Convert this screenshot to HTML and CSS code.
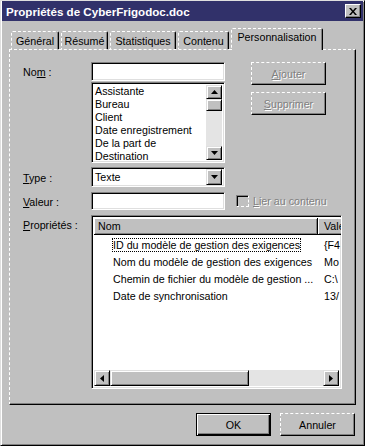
FILE: index.html
```html
<!DOCTYPE html>
<html lang="fr">
<head>
  <meta charset="UTF-8">
  <title>Propriétés de CyberFrigodoc.doc</title>
  <link rel="stylesheet" href="styles.css">
</head>
<body>
<div class="window">
  <div class="titlebar">
    <span class="title">Propriétés de CyberFrigodoc.doc</span>
    <span class="close">
      <svg width="8" height="7" viewBox="0 0 8 7"><path d="M0 0h2l2 2.5L6 0h2L5 3.5 8 7H6L4 4.5 2 7H0l3-3.5z" fill="#000"/></svg>
    </span>
  </div>

  <div class="tabs">
    <div class="tab t-gen">Général</div>
    <div class="tab t-res">Résumé</div>
    <div class="tab t-stat">Statistiques</div>
    <div class="tab t-cont">Contenu</div>
    <div class="tab t-pers active">Personnalisation</div>
  </div>

  <div class="panel">
    <div class="row first">
      <div class="lbl">No<u>m</u> :</div>
      <div class="fields">
        <div class="sunken name-input"></div>
        <div class="sunken listbox">
          <ul class="items">
            <li>Assistante</li>
            <li>Bureau</li>
            <li>Client</li>
            <li>Date enregistrement</li>
            <li>De la part de</li>
            <li>Destination</li>
          </ul>
          <div class="vscroll">
            <div class="sbtn up"><svg width="7" height="4"><polygon points="3.5,0 7,4 0,4" fill="#000"/></svg></div>
            <div class="thumb"></div>
            <div class="track"></div>
            <div class="sbtn down"><svg width="7" height="4"><polygon points="0,0 7,0 3.5,4" fill="#000"/></svg></div>
          </div>
        </div>
      </div>
      <div class="side">
        <div class="btn disabled"><u>A</u>jouter</div>
        <div class="btn disabled"><u>S</u>upprimer</div>
      </div>
    </div>

    <div class="row type-row">
      <div class="lbl"><u>T</u>ype :</div>
      <div class="sunken select">
        <span class="select-text">Texte</span>
        <div class="sbtn drop"><svg width="7" height="4"><polygon points="0,0 7,0 3.5,4" fill="#000"/></svg></div>
      </div>
    </div>

    <div class="row value-row">
      <div class="lbl"><u>V</u>aleur :</div>
      <div class="sunken value-input"></div>
      <div class="check">
        <span class="box"></span>
        <span class="grey"><u>L</u>ier au contenu</span>
      </div>
    </div>

    <div class="row props-row">
      <div class="lbl"><u>P</u>ropriétés :</div>
      <div class="sunken props">
        <div class="head">
          <div class="hcell c-name">Nom</div>
          <div class="hcell c-val">Vale</div>
        </div>
        <div class="rows">
          <div class="prow"><div class="c-name"><span class="focus">ID du modèle de gestion des exigences</span></div><div class="c-val">{F4</div></div>
          <div class="prow"><div class="c-name"><span>Nom du modèle de gestion des exigences</span></div><div class="c-val">Mo</div></div>
          <div class="prow"><div class="c-name"><span>Chemin de fichier du modèle de gestion ...</span></div><div class="c-val">C:\</div></div>
          <div class="prow"><div class="c-name"><span>Date de synchronisation</span></div><div class="c-val">13/</div></div>
        </div>
        <div class="hscroll">
          <div class="sbtn side-btn"><svg width="4" height="7"><polygon points="4,0 4,7 0,3.5" fill="#000"/></svg></div>
          <div class="thumb hthumb"></div>
          <div class="track"></div>
          <div class="sbtn side-btn"><svg width="4" height="7"><polygon points="0,0 4,3.5 0,7" fill="#000"/></svg></div>
        </div>
      </div>
    </div>
  </div>

  <div class="footer">
    <div class="btn default">OK</div>
    <div class="btn">Annuler</div>
  </div>
</div>
</body>
</html>
```

FILE: styles.css
```css
* {
  box-sizing: border-box;
}

body {
  margin: 0;
  font-family: "Liberation Sans", Arial, sans-serif;
  font-size: 10.7px;
  color: #000;
  background: #c0c0c0;
}

u {
  text-decoration: underline;
  text-underline-offset: 1px;
}

.window {
  width: 365px;
  height: 446px;
  background: #c0c0c0;
  border: 1px solid;
  border-color: #dfdfdf #000 #000 #dfdfdf;
  box-shadow: inset 1px 1px #fff, inset -1px -1px #808080;
  padding: 0 1px 1px 1px;
}

/* barre de titre */
.titlebar {
  height: 20px;
  background: #31316a;
  display: flex;
  align-items: center;
  justify-content: space-between;
  padding-left: 4px;
}

.title {
  color: #fff;
  font-weight: bold;
  font-size: 11.6px;
}

.close {
  width: 16px;
  height: 14px;
  margin-right: 2px;
  background: #c0c0c0;
  border: 1px solid;
  border-color: #fff #000 #000 #fff;
  box-shadow: inset -1px -1px #808080;
  display: flex;
  align-items: center;
  justify-content: center;
}

/* onglets */
.tabs {
  display: flex;
  align-items: flex-end;
  gap: 2px;
  height: 21px;
  margin-top: 7px;
  padding-left: 9px;
}

.tab {
  height: 18px;
  border-top: 1px dashed #fff;
  border-left: 1px dashed #fff;
  border-right: 1px solid #000;
  box-shadow: inset -1px 0 #808080;
  border-radius: 2px 2px 0 0;
  text-align: center;
  padding-top: 3px;
}

.t-gen { width: 48px; }
.t-res { width: 47px; }
.t-stat { width: 66px; }
.t-cont { width: 51px; }
.t-pers { width: 92px; }

.tab.active {
  height: 22px;
  margin-bottom: -1px;
  position: relative;
  z-index: 1;
  background: #c0c0c0;
  padding-top: 2px;
}

/* panneau */
.panel {
  margin-left: 7px;
  width: 347px;
  height: 356px;
  border-top: 1px dashed #fff;
  border-left: 1px dashed #fff;
  border-right: 1px solid #000;
  border-bottom: 1px solid #000;
  box-shadow: inset -1px -1px #808080;
  padding: 12px 0 0 13px;
}

.row {
  display: flex;
  align-items: flex-start;
}

.lbl {
  width: 68px;
  padding-top: 4px;
}

.sunken {
  background: #fff;
  border: 1px solid;
  border-color: #808080 #fff #fff #808080;
  box-shadow: inset 1px 1px #000, inset -1px -1px #dfdfdf;
}

.fields {
  width: 134px;
}

.name-input {
  height: 19px;
}

.listbox {
  margin-top: 1px;
  height: 81px;
  display: flex;
  padding: 2px;
}

.items {
  list-style: none;
  margin: 0;
  padding: 0 0 0 1px;
  flex: 1;
  line-height: 13px;
}

.vscroll {
  width: 16px;
  display: flex;
  flex-direction: column;
}

.sbtn {
  background: #c0c0c0;
  border: 1px solid;
  border-color: #dfdfdf #000 #000 #dfdfdf;
  box-shadow: inset 1px 1px #fff, inset -1px -1px #808080;
  display: flex;
  align-items: center;
  justify-content: center;
}

.vscroll .sbtn {
  height: 14px;
}

.thumb {
  background: #c0c0c0;
  border: 1px solid;
  border-color: #dfdfdf #000 #000 #dfdfdf;
  box-shadow: inset 1px 1px #fff, inset -1px -1px #808080;
}

.vscroll .thumb {
  height: 12px;
}

.track {
  flex: 1;
  background: #e4e4e4;
}

.side {
  margin-left: 26px;
  display: flex;
  flex-direction: column;
  gap: 7px;
}

.btn {
  width: 75px;
  height: 23px;
  display: flex;
  align-items: center;
  justify-content: center;
  border-top: 1px dashed #fff;
  border-left: 1px dashed #fff;
  border-right: 1px solid #000;
  border-bottom: 1px solid #000;
  box-shadow: inset -1px -1px #808080;
}

.btn.disabled {
  color: #808080;
  text-shadow: 1px 1px #fff;
}

.btn.default {
  border: 1px solid #000;
  box-shadow: inset 1px 1px #fff, inset -1px -1px #000, inset -2px -2px #808080;
}

/* type / valeur */
.type-row {
  margin-top: 4px;
}

.type-row .lbl {
  padding-top: 5px;
}

.select {
  width: 134px;
  height: 20px;
  display: flex;
  align-items: center;
  padding: 2px;
}

.select-text {
  flex: 1;
  padding-left: 1px;
}

.drop {
  width: 16px;
  height: 16px;
}

.value-row {
  margin-top: 5px;
}

.value-input {
  width: 134px;
  height: 18px;
}

.check {
  display: flex;
  align-items: center;
  gap: 4px;
  margin-left: 11px;
  padding-top: 3px;
}

.box {
  width: 13px;
  height: 12px;
  border-top: 1px solid #808080;
  border-left: 1px solid #808080;
  border-right: 1px dashed #fff;
  border-bottom: 1px dashed #fff;
  box-shadow: inset 1px 1px #000;
}

.grey {
  color: #808080;
  text-shadow: 1px 1px #fff;
}

/* liste des proprietes */
.props-row {
  margin-top: 5px;
}

.props {
  width: 251px;
  height: 174px;
  padding: 2px;
  display: flex;
  flex-direction: column;
  overflow: hidden;
}

.head {
  display: flex;
  height: 17px;
  flex-shrink: 0;
}

.hcell {
  background: #c0c0c0;
  border-right: 1px solid #000;
  border-bottom: 1px solid #000;
  box-shadow: inset 1px 1px #fff, inset -1px -1px #808080;
  padding: 2px 0 0 4px;
  white-space: nowrap;
}

.c-name {
  width: 224px;
  flex-shrink: 0;
}

.c-val {
  flex: 1;
  padding-left: 6px;
}

.hcell.c-val {
  padding-left: 6px;
  border-right: none;
}

.rows {
  flex: 1;
  padding-top: 1px;
}

.prow {
  display: flex;
  height: 17px;
  align-items: center;
  white-space: nowrap;
}

.prow .c-name {
  padding-left: 18px;
}

.prow .c-name span {
  padding: 1px;
}

.focus {
  outline: 1px dotted #000;
  outline-offset: -1px;
}

.hscroll {
  height: 16px;
  display: flex;
  flex-shrink: 0;
}

.side-btn {
  width: 16px;
}

.hthumb {
  width: 139px;
}

.footer {
  display: flex;
  justify-content: flex-end;
  gap: 9px;
  margin-top: 8px;
  padding-right: 8px;
}
```
